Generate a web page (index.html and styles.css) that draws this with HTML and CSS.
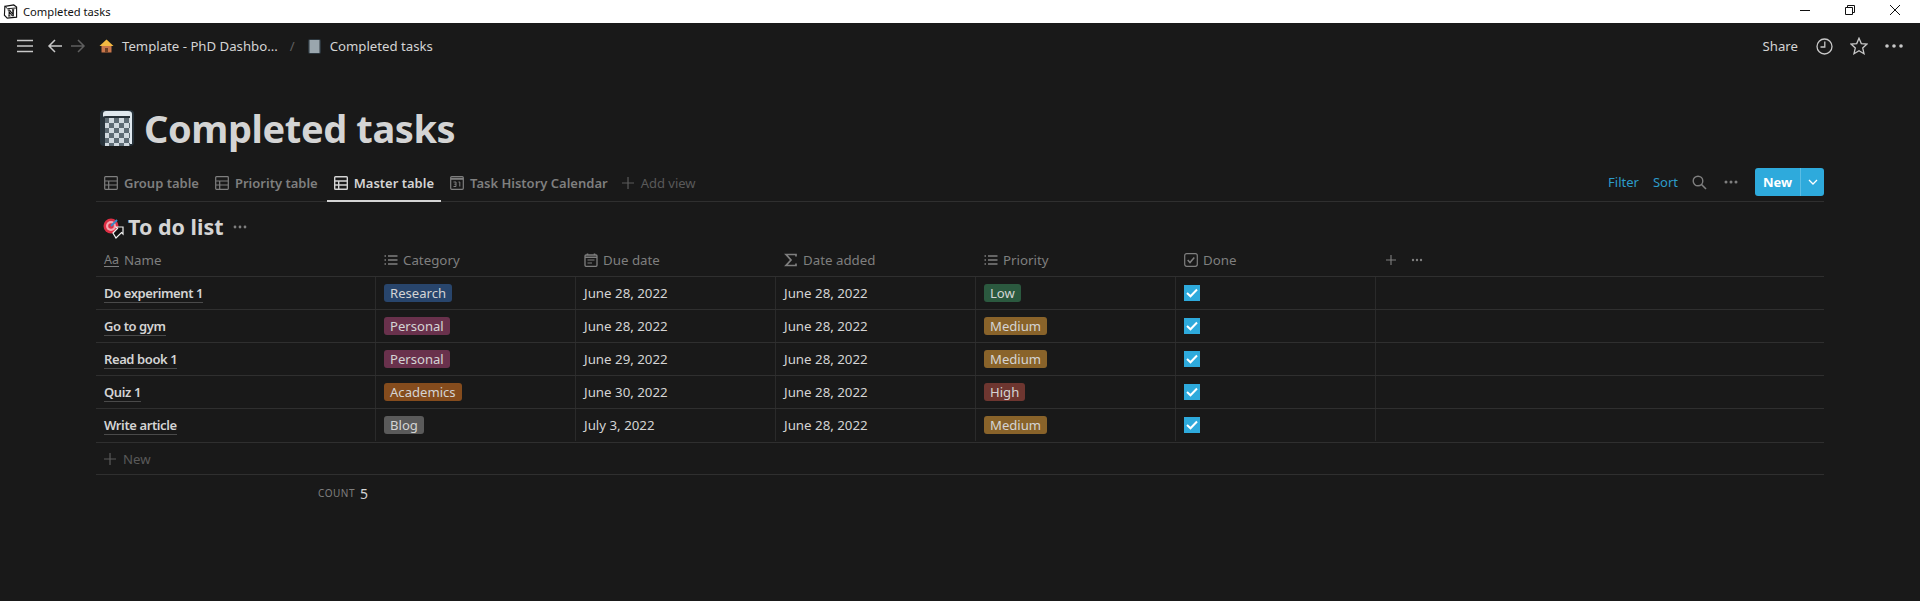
FILE: index.html
```html
<!DOCTYPE html>
<html lang="en">
<head>
  <meta charset="UTF-8" />
  <title>Completed tasks</title>
  <link rel="stylesheet" href="styles.css">
</head>
<body>
  <!-- Window title bar -->
  <div class="titlebar">
    <svg class="app-logo" width="15" height="15" viewBox="0 0 16 16">
      <path d="M2 2.5 L11.5 1 L14.5 3.2 V14 L4.5 15 L1.5 12 Z" fill="#fff" stroke="#111" stroke-width="1.2"/>
      <path d="M2 2.5 L4.8 5 L14.5 4.2" fill="none" stroke="#111" stroke-width="1"/>
      <path d="M5 6.5 H7 L10.5 11 V6.5 M9.5 6.2 H12 M11 6.2 V12.5 H9.8 L6.5 8.2 V12.5 M5.5 12.8 H8" fill="none" stroke="#111" stroke-width="1.1"/>
    </svg>
    <span class="window-title">Completed tasks</span>
    <div class="window-buttons">
      <svg width="12" height="12" viewBox="0 0 12 12"><path d="M1 6.5 H11" stroke="#111" stroke-width="1"/></svg>
      <svg width="12" height="12" viewBox="0 0 12 12"><path d="M1.5 3.5 H8.5 V10.5 H1.5 Z M3.5 3.5 V1.5 H10.5 V8.5 H8.5" fill="none" stroke="#111" stroke-width="1"/></svg>
      <svg width="12" height="12" viewBox="0 0 12 12"><path d="M1 1 L11 11 M11 1 L1 11" stroke="#111" stroke-width="1"/></svg>
    </div>
  </div>

  <!-- Top navigation -->
  <nav class="topbar">
    <svg class="menu-icon" width="18" height="14" viewBox="0 0 18 14"><path d="M1 1.5 H17 M1 7 H17 M1 12.5 H17" stroke="#c8c8c8" stroke-width="1.6"/></svg>
    <svg class="arrow" width="16" height="14" viewBox="0 0 16 14"><path d="M15 7 H2 M8 1 L2 7 L8 13" fill="none" stroke="#c8c8c8" stroke-width="1.5"/></svg>
    <svg class="arrow" width="16" height="14" viewBox="0 0 16 14"><path d="M1 7 H14 M8 1 L14 7 L8 13" fill="none" stroke="#5f5f5f" stroke-width="1.5"/></svg>
    <svg class="crumb-icon home" width="15" height="14" viewBox="0 0 15 14">
      <path d="M0.5 7 L7.5 0.5 L14.5 7 Z" fill="#f4b942"/>
      <path d="M2.5 7 H12.5 V13.5 H2.5 Z" fill="#c9764a"/>
      <path d="M6 9 H9 V13.5 H6 Z" fill="#6d3f25"/>
    </svg>
    <span class="crumb">Template - PhD Dashbo...</span>
    <span class="slash">/</span>
    <svg class="crumb-icon book" width="13" height="15" viewBox="0 0 13 15">
      <rect width="13" height="15" rx="2" fill="#2c363d"/>
      <rect x="1.5" y="1" width="10" height="13" fill="#9aa6ad"/>
    </svg>
    <span class="crumb">Completed tasks</span>
    <div class="topbar-right">
      <span class="share">Share</span>
      <svg width="17" height="17" viewBox="0 0 17 17"><circle cx="8.5" cy="8.5" r="7.5" fill="none" stroke="#c8c8c8" stroke-width="1.3"/><path d="M8.8 3.5 V9 H4.5" fill="none" stroke="#c8c8c8" stroke-width="1.3"/></svg>
      <svg width="18" height="18" viewBox="0 0 18 18"><path d="M9 1.2 L11.3 6.6 L17 7.1 L12.7 11 L14 16.7 L9 13.7 L4 16.7 L5.3 11 L1 7.1 L6.7 6.6 Z" fill="none" stroke="#c8c8c8" stroke-width="1.3"/></svg>
      <svg width="18" height="4" viewBox="0 0 18 4"><circle cx="2" cy="2" r="1.8" fill="#c8c8c8"/><circle cx="9" cy="2" r="1.8" fill="#c8c8c8"/><circle cx="16" cy="2" r="1.8" fill="#c8c8c8"/></svg>
    </div>
  </nav>

  <main class="page">
    <!-- Page title -->
    <header class="page-header">
      <svg class="page-icon" width="34" height="36" viewBox="0 0 34 36">
        <defs>
          <pattern id="checks" width="10" height="10" patternUnits="userSpaceOnUse" x="4" y="8">
            <rect width="10" height="10" fill="#cfd8de"/>
            <rect width="5" height="5" fill="#5d6b74"/>
            <rect x="5" y="5" width="5" height="5" fill="#5d6b74"/>
          </pattern>
        </defs>
        <rect width="34" height="36" rx="4" fill="#27323a"/>
        <path d="M3 7 V4 Q3 1 6 1 H28 Q32 1 32 4 V34 H30 V6 H6 Q3 6 3 7 Z" fill="#dfe8ee"/>
        <rect x="5" y="8" width="25" height="28" fill="url(#checks)"/>
      </svg>
      <h1>Completed tasks</h1>
    </header>

    <!-- View tabs -->
    <div class="tabs">
      <a class="tab">
        <svg class="tab-icon" width="14" height="14" viewBox="0 0 14 14"><path d="M1.5 .7 H12.5 Q13.3 .7 13.3 1.5 V12.5 Q13.3 13.3 12.5 13.3 H1.5 Q.7 13.3 .7 12.5 V1.5 Q.7 .7 1.5 .7 Z M.7 5 H13.3 M.7 9 H13.3 M4.7 5 V13.3" fill="none" stroke="currentColor" stroke-width="1.2"/></svg>
        Group table
      </a>
      <a class="tab">
        <svg class="tab-icon" width="14" height="14" viewBox="0 0 14 14"><path d="M1.5 .7 H12.5 Q13.3 .7 13.3 1.5 V12.5 Q13.3 13.3 12.5 13.3 H1.5 Q.7 13.3 .7 12.5 V1.5 Q.7 .7 1.5 .7 Z M.7 5 H13.3 M.7 9 H13.3 M4.7 5 V13.3" fill="none" stroke="currentColor" stroke-width="1.2"/></svg>
        Priority table
      </a>
      <a class="tab active">
        <svg class="tab-icon" width="14" height="14" viewBox="0 0 14 14"><path d="M1.5 .7 H12.5 Q13.3 .7 13.3 1.5 V12.5 Q13.3 13.3 12.5 13.3 H1.5 Q.7 13.3 .7 12.5 V1.5 Q.7 .7 1.5 .7 Z M.7 5 H13.3 M.7 9 H13.3 M4.7 5 V13.3" fill="none" stroke="currentColor" stroke-width="1.4"/></svg>
        Master table
      </a>
      <a class="tab">
        <svg class="tab-icon" width="14" height="14" viewBox="0 0 14 14"><rect x=".7" y=".7" width="12.6" height="12.6" rx="1" fill="none" stroke="currentColor" stroke-width="1.2"/><path d="M.7 2.8 H13.3" stroke="currentColor" stroke-width="2"/><path d="M3.5 6 H6 V10.5 H3.5 M4.3 8.2 H6 M8.5 6 H9.8 V10.5" fill="none" stroke="currentColor" stroke-width="1"/></svg>
        Task History Calendar
      </a>
      <a class="tab add-view">
        <svg class="tab-icon" width="14" height="14" viewBox="0 0 14 14"><path d="M7 1 V13 M1 7 H13" stroke="currentColor" stroke-width="1.2"/></svg>
        Add view
      </a>
      <div class="tab-actions">
        <span class="link">Filter</span>
        <span class="link">Sort</span>
        <svg width="15" height="15" viewBox="0 0 15 15"><circle cx="6" cy="6" r="4.8" fill="none" stroke="#7f7f7f" stroke-width="1.4"/><path d="M9.5 9.5 L14 14" stroke="#7f7f7f" stroke-width="1.6"/></svg>
        <svg class="more" width="14" height="4" viewBox="0 0 14 4"><circle cx="2" cy="2" r="1.5" fill="#7f7f7f"/><circle cx="7" cy="2" r="1.5" fill="#7f7f7f"/><circle cx="12" cy="2" r="1.5" fill="#7f7f7f"/></svg>
        <div class="new-btn">
          <span class="new-label">New</span>
          <span class="new-caret"><svg width="10" height="6" viewBox="0 0 10 6"><path d="M1 1 L5 5 L9 1" fill="none" stroke="#fff" stroke-width="1.3"/></svg></span>
        </div>
      </div>
    </div>

    <!-- Collection title -->
    <div class="list-title">
      <svg class="target" width="21" height="21" viewBox="0 0 21 21">
        <circle cx="8" cy="8" r="7.5" fill="#dd2e44"/>
        <circle cx="8" cy="8" r="5" fill="#f4a6b0"/>
        <circle cx="8" cy="8" r="2.8" fill="#dd2e44"/>
        <path d="M8 8 L14 2" stroke="#3b88c3" stroke-width="2"/>
        <path d="M10 15 L14.5 10.5 L13 9 H20 V16 L18.5 14.5 L13 20 Z" fill="#111" stroke="#eee" stroke-width="1.2"/>
      </svg>
      <h2>To do list</h2>
      <svg class="more" width="14" height="4" viewBox="0 0 14 4"><circle cx="2" cy="2" r="1.4" fill="#7f7f7f"/><circle cx="7" cy="2" r="1.4" fill="#7f7f7f"/><circle cx="12" cy="2" r="1.4" fill="#7f7f7f"/></svg>
    </div>

    <!-- Table -->
    <div class="table">
      <div class="row head">
        <div class="cell"><span class="aa">Aa</span>Name</div>
        <div class="cell"><svg class="col-icon" width="14" height="14" viewBox="0 0 14 14"><path d="M4 3 H13.5 M4 7 H13.5 M4 11 H13.5 M.5 3 H2 M.5 7 H2 M.5 11 H2" stroke="currentColor" stroke-width="1.4"/></svg>Category</div>
        <div class="cell"><svg class="col-icon" width="14" height="14" viewBox="0 0 14 14"><rect x="1" y="2" width="12" height="11.3" rx="1" fill="none" stroke="currentColor" stroke-width="1.3"/><path d="M1 4.3 H13 M3.5 .5 V2 M10.5 .5 V2" stroke="currentColor" stroke-width="1.6"/><path d="M3.5 7 H10.5 M3.5 10 H8" stroke="currentColor" stroke-width="1.1"/></svg>Due date</div>
        <div class="cell"><svg class="col-icon" width="14" height="14" viewBox="0 0 14 14"><path d="M12 3.5 V1.5 H2 L7 7 L2 12.5 H12 V10.5" fill="none" stroke="currentColor" stroke-width="1.7"/></svg>Date added</div>
        <div class="cell"><svg class="col-icon" width="14" height="14" viewBox="0 0 14 14"><path d="M4 3 H13.5 M4 7 H13.5 M4 11 H13.5 M.5 3 H2 M.5 7 H2 M.5 11 H2" stroke="currentColor" stroke-width="1.4"/></svg>Priority</div>
        <div class="cell"><svg class="col-icon" width="14" height="14" viewBox="0 0 14 14"><rect x=".7" y=".7" width="12.6" height="12.6" rx="2" fill="none" stroke="currentColor" stroke-width="1.2"/><path d="M3.7 7 L6 9.5 L10.3 4.5" fill="none" stroke="currentColor" stroke-width="1.5"/></svg>Done</div>
        <div class="cell head-actions">
          <svg width="12" height="12" viewBox="0 0 12 12"><path d="M6 1 V11 M1 6 H11" stroke="currentColor" stroke-width="1.1"/></svg>
          <svg class="more" width="12" height="4" viewBox="0 0 12 4"><circle cx="2" cy="2" r="1.2" fill="currentColor"/><circle cx="6" cy="2" r="1.2" fill="currentColor"/><circle cx="10" cy="2" r="1.2" fill="currentColor"/></svg>
        </div>
      </div>

      <div class="row">
        <div class="cell"><span class="name">Do experiment 1</span></div>
        <div class="cell"><span class="pill blue">Research</span></div>
        <div class="cell">June 28, 2022</div>
        <div class="cell">June 28, 2022</div>
        <div class="cell"><span class="pill green">Low</span></div>
        <div class="cell"><span class="check"><svg width="12" height="10" viewBox="0 0 12 10"><path d="M1 5 L4.5 8.3 L11 1.5" fill="none" stroke="#fff" stroke-width="2"/></svg></span></div>
        <div class="cell"></div>
      </div>
      <div class="row">
        <div class="cell"><span class="name">Go to gym</span></div>
        <div class="cell"><span class="pill pink">Personal</span></div>
        <div class="cell">June 28, 2022</div>
        <div class="cell">June 28, 2022</div>
        <div class="cell"><span class="pill yellow">Medium</span></div>
        <div class="cell"><span class="check"><svg width="12" height="10" viewBox="0 0 12 10"><path d="M1 5 L4.5 8.3 L11 1.5" fill="none" stroke="#fff" stroke-width="2"/></svg></span></div>
        <div class="cell"></div>
      </div>
      <div class="row">
        <div class="cell"><span class="name">Read book 1</span></div>
        <div class="cell"><span class="pill pink">Personal</span></div>
        <div class="cell">June 29, 2022</div>
        <div class="cell">June 28, 2022</div>
        <div class="cell"><span class="pill yellow">Medium</span></div>
        <div class="cell"><span class="check"><svg width="12" height="10" viewBox="0 0 12 10"><path d="M1 5 L4.5 8.3 L11 1.5" fill="none" stroke="#fff" stroke-width="2"/></svg></span></div>
        <div class="cell"></div>
      </div>
      <div class="row">
        <div class="cell"><span class="name">Quiz 1</span></div>
        <div class="cell"><span class="pill orange">Academics</span></div>
        <div class="cell">June 30, 2022</div>
        <div class="cell">June 28, 2022</div>
        <div class="cell"><span class="pill red">High</span></div>
        <div class="cell"><span class="check"><svg width="12" height="10" viewBox="0 0 12 10"><path d="M1 5 L4.5 8.3 L11 1.5" fill="none" stroke="#fff" stroke-width="2"/></svg></span></div>
        <div class="cell"></div>
      </div>
      <div class="row last">
        <div class="cell"><span class="name">Write article</span></div>
        <div class="cell"><span class="pill gray">Blog</span></div>
        <div class="cell">July 3, 2022</div>
        <div class="cell">June 28, 2022</div>
        <div class="cell"><span class="pill yellow">Medium</span></div>
        <div class="cell"><span class="check"><svg width="12" height="10" viewBox="0 0 12 10"><path d="M1 5 L4.5 8.3 L11 1.5" fill="none" stroke="#fff" stroke-width="2"/></svg></span></div>
        <div class="cell"></div>
      </div>

      <div class="new-row">
        <svg width="12" height="12" viewBox="0 0 12 12"><path d="M6 0 V12 M0 6 H12" stroke="currentColor" stroke-width="1.2"/></svg>
        New
      </div>
      <div class="count-row"><span class="count-label">COUNT</span><span class="count-value">5</span></div>
    </div>
  </main>
</body>
</html>
```

FILE: styles.css
```css
* {
  box-sizing: border-box;
}

html, body {
  height: 100%;
}

body {
  margin: 0;
  background: #191919;
  color: #d4d4d4;
  font-family: "Noto Sans", "Open Sans", sans-serif;
  font-size: 14px;
  overflow: hidden;
}

.titlebar {
  height: 23px;
  background: #fff;
  color: #111;
  display: flex;
  align-items: center;
  padding-left: 3px;
  font-size: 11.2px;
}

.app-logo {
  margin-right: 5px;
  margin-bottom: 1px;
}

.window-buttons {
  margin-left: auto;
  display: flex;
  gap: 33px;
  padding: 0 19px 3px 0;
}

.topbar {
  height: 46px;
  display: flex;
  align-items: center;
  padding: 0 17px 0 16px;
  font-size: 13.2px;
}

.menu-icon {
  margin-right: 13px;
}

.arrow {
  margin-right: 7px;
}

.crumb-icon {
  margin: 0 8px 0 6px;
}

.crumb-icon.book {
  margin: 0 9px 0 6px;
}

.slash {
  margin: 0 7px 0 12px;
  color: #5f5f5f;
}

.topbar-right {
  margin-left: auto;
  display: flex;
  align-items: center;
  gap: 17px;
}

.share {
  margin-right: 1px;
}

.page {
  padding: 0 96px;
}

.page-header {
  height: 96px;
  display: flex;
  align-items: center;
  padding: 22px 0 0 4px;
}

.page-icon {
  margin-right: 10px;
}

h1 {
  margin: 0;
  font-size: 38px;
  font-weight: 700;
  line-height: 48px;
  letter-spacing: -.4px;
}

.tabs {
  height: 37px;
  border-bottom: 1px solid #2f2f2f;
  display: flex;
  align-items: stretch;
  font-weight: 600;
  font-size: 13px;
  color: #7f7f7f;
}

.tab {
  display: flex;
  align-items: center;
  gap: 6px;
  padding: 0 7px 2px;
  margin-left: 1px;
  height: 37px;
  white-space: nowrap;
}

.tab + .tab {
  margin-left: 2px;
}

.tab.active {
  color: #d4d4d4;
  border-bottom: 2px solid #d4d4d4;
  padding-bottom: 0;
}

.tab.add-view {
  color: #5a5a5a;
  font-weight: 400;
  margin-left: -1px;
}

.tab-actions {
  margin-left: auto;
  display: flex;
  align-items: center;
  gap: 14px;
  padding-bottom: 2px;
  font-weight: 400;
}

.link {
  color: #2d9cc9;
}

.tab-actions .more {
  margin: 0 3px;
}

.new-btn {
  display: flex;
  height: 28px;
  background: #2eaadc;
  border-radius: 3px;
  color: #fff;
  font-weight: 700;
  align-items: stretch;
}

.new-label {
  display: flex;
  align-items: center;
  justify-content: center;
  width: 45px;
}

.new-caret {
  display: flex;
  align-items: center;
  justify-content: center;
  width: 24px;
  border-left: 1px solid #5bbde4;
}

.list-title {
  height: 47px;
  display: flex;
  align-items: center;
  padding: 2px 0 0 7px;
}

.target {
  margin-right: 4px;
  margin-top: 3px;
}

h2 {
  margin: 0;
  font-size: 21.5px;
  font-weight: 700;
}

.list-title .more {
  margin-left: 9px;
}

.row {
  display: grid;
  grid-template-columns: 280px repeat(5, 200px) 1fr;
  height: 33px;
  border-bottom: 1px solid #2f2f2f;
  font-size: 13.3px;
}

.row.last {
  height: 34px;
  padding-bottom: 1px;
}

.row.head {
  height: 28px;
  color: #7f7f7f;
}

.row.head .cell {
  border-right: none;
  padding-bottom: 5px;
}

.cell {
  display: flex;
  align-items: center;
  padding: 0 8px;
  border-right: 1px solid #2a2a2a;
  white-space: nowrap;
}

.cell:last-child {
  border-right: none;
}

.aa {
  font-size: 12.5px;
  margin-right: 5px;
  border-bottom: 1px solid #7f7f7f;
  line-height: 13px;
}

.col-icon {
  margin-right: 5px;
}

.head-actions {
  gap: 14px;
  padding-left: 9px;
}

.name {
  font-weight: 600;
  border-bottom: 1px solid #4a4a4a;
  line-height: 18px;
  font-size: 13px;
  letter-spacing: -.4px;
}

.pill {
  display: inline-block;
  height: 18px;
  line-height: 18px;
  padding: 0 6px;
  border-radius: 3px;
  font-size: 13.1px;
}

.blue { background: #28456c; }
.pink { background: #69314c; }
.orange { background: #854c1d; }
.gray { background: #5a5a5a; }
.green { background: #2b593f; }
.yellow { background: #89632a; }
.red { background: #6e3630; }

.check {
  width: 16px;
  height: 16px;
  background: #2eaadc;
  display: flex;
  align-items: center;
  justify-content: center;
}

.new-row {
  height: 32px;
  display: flex;
  align-items: center;
  gap: 7px;
  padding-left: 8px;
  border-bottom: 1px solid #2f2f2f;
  color: #5a5a5a;
  font-size: 13.2px;
}

.count-row {
  height: 36px;
  display: flex;
  align-items: center;
  justify-content: flex-end;
  width: 272px;
  gap: 5px;
}

.count-label {
  font-size: 10px;
  letter-spacing: .5px;
  color: #7f7f7f;
}

.count-value {
  font-size: 14px;
}
```
